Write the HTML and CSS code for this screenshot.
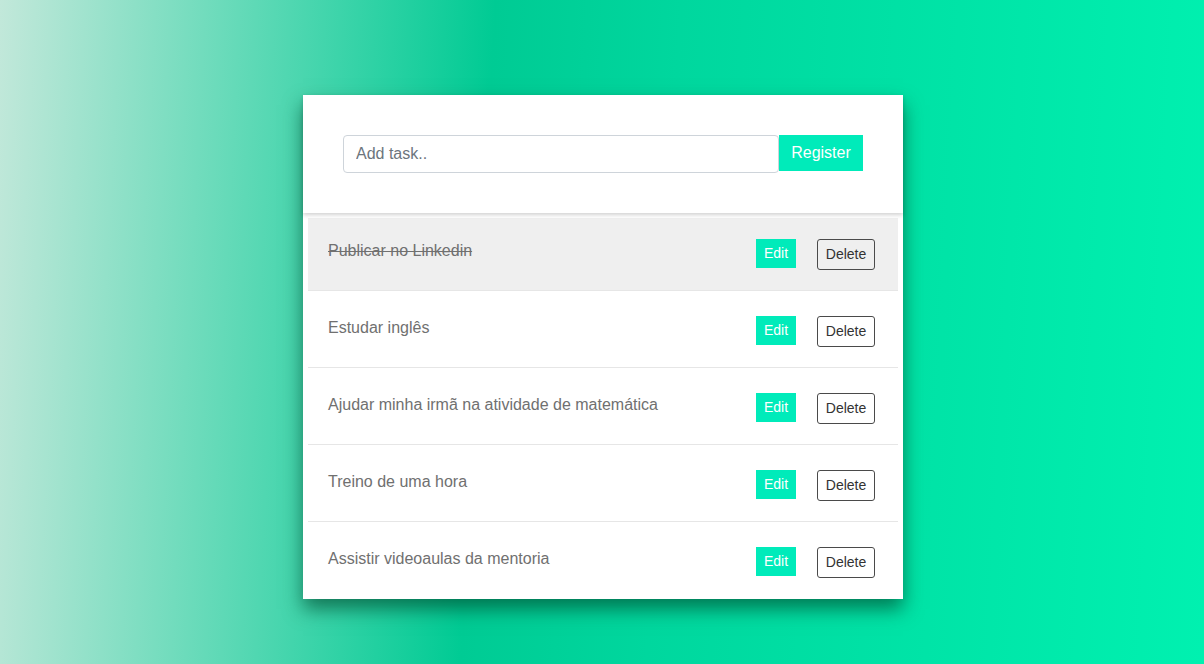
FILE: index.html
```html
<!DOCTYPE html>
<html lang="pt-BR">
<head>
<meta charset="utf-8">
<title>Tasks</title>
<link rel="stylesheet" href="styles.css">
</head>
<body>
<main class="page">
  <section class="card">
    <header class="card-head">
      <form class="add-form">
        <input class="add-input" type="text" placeholder="Add task..">
        <button class="btn-register" type="button">Register</button>
      </form>
    </header>
    <ul class="task-list">
      <li class="task done"><span class="task-text">Publicar no Linkedin</span><div class="actions"><button class="btn-edit">Edit</button><button class="btn-delete">Delete</button></div></li>
      <li class="task"><span class="task-text">Estudar inglês</span><div class="actions"><button class="btn-edit">Edit</button><button class="btn-delete">Delete</button></div></li>
      <li class="task"><span class="task-text">Ajudar minha irmã na atividade de matemática</span><div class="actions"><button class="btn-edit">Edit</button><button class="btn-delete">Delete</button></div></li>
      <li class="task"><span class="task-text">Treino de uma hora</span><div class="actions"><button class="btn-edit">Edit</button><button class="btn-delete">Delete</button></div></li>
      <li class="task"><span class="task-text">Assistir videoaulas da mentoria</span><div class="actions"><button class="btn-edit">Edit</button><button class="btn-delete">Delete</button></div></li>
    </ul>
  </section>
</main>
</body>
</html>
```

FILE: styles.css
```css
* { box-sizing: border-box; }
html, body { margin: 0; padding: 0; }
body {
  font-family: "Liberation Sans", Arial, sans-serif;
  background: linear-gradient(93deg, #c2e8da 0%, #00cb94 40%, #00d79e 55%, #00f1b0 100%);
  min-height: 664px;
}
.page {
  display: flex;
  justify-content: center;
  padding-top: 95px;
  padding-left: 2px;
}
.card {
  width: 600px;
  background: #fff;
  box-shadow: 0 10px 18px rgba(0, 70, 45, 0.65);
}
.card-head {
  height: 118px;
  padding: 40px 40px 0;
  box-shadow: 0 2px 4px rgba(0, 0, 0, 0.18);
  position: relative;
  z-index: 1;
}
.add-form { display: flex; align-items: flex-start; }
.add-input {
  width: 436px;
  height: 38px;
  border: 1px solid #ced4da;
  border-radius: 4px;
  padding: 0 12px;
  font-family: inherit;
  font-size: 16px;
  color: #495057;
  outline: none;
}
.add-input::placeholder { color: #6c757d; }
.btn-register {
  width: 84px;
  height: 36px;
  border: 0;
  background: #00ebba;
  color: #fff;
  font-family: inherit;
  font-size: 16px;
  padding: 0;
}
.task-list {
  list-style: none;
  margin: 0;
  padding: 1px 5px 0;
}
.task {
  height: 77px;
  border-bottom: 1px solid #e6e6e6;
  display: flex;
  justify-content: space-between;
  align-items: flex-start;
  padding: 28px 23px 0 20px;
}
.task:last-child { border-bottom: 0; }
.task.done { background: linear-gradient(#ffffff 0 4px, #efefef 4px); }
.task-text {
  font-size: 16px;
  color: #707070;
  line-height: 18px;
}
.task.done .task-text { text-decoration: line-through; }
.actions { display: flex; align-items: flex-start; gap: 21px; margin-top: -3px; }
.btn-edit {
  width: 40px;
  height: 29px;
  border: 0;
  background: #00ebba;
  color: #fff;
  font-family: inherit;
  font-size: 14px;
  padding: 0 0 1px;
}
.btn-delete {
  width: 58px;
  height: 31px;
  border: 1px solid #4a4a4a;
  border-radius: 3px;
  background: transparent;
  color: #333;
  font-family: inherit;
  font-size: 14px;
  padding: 0 0 2px;
}
```
